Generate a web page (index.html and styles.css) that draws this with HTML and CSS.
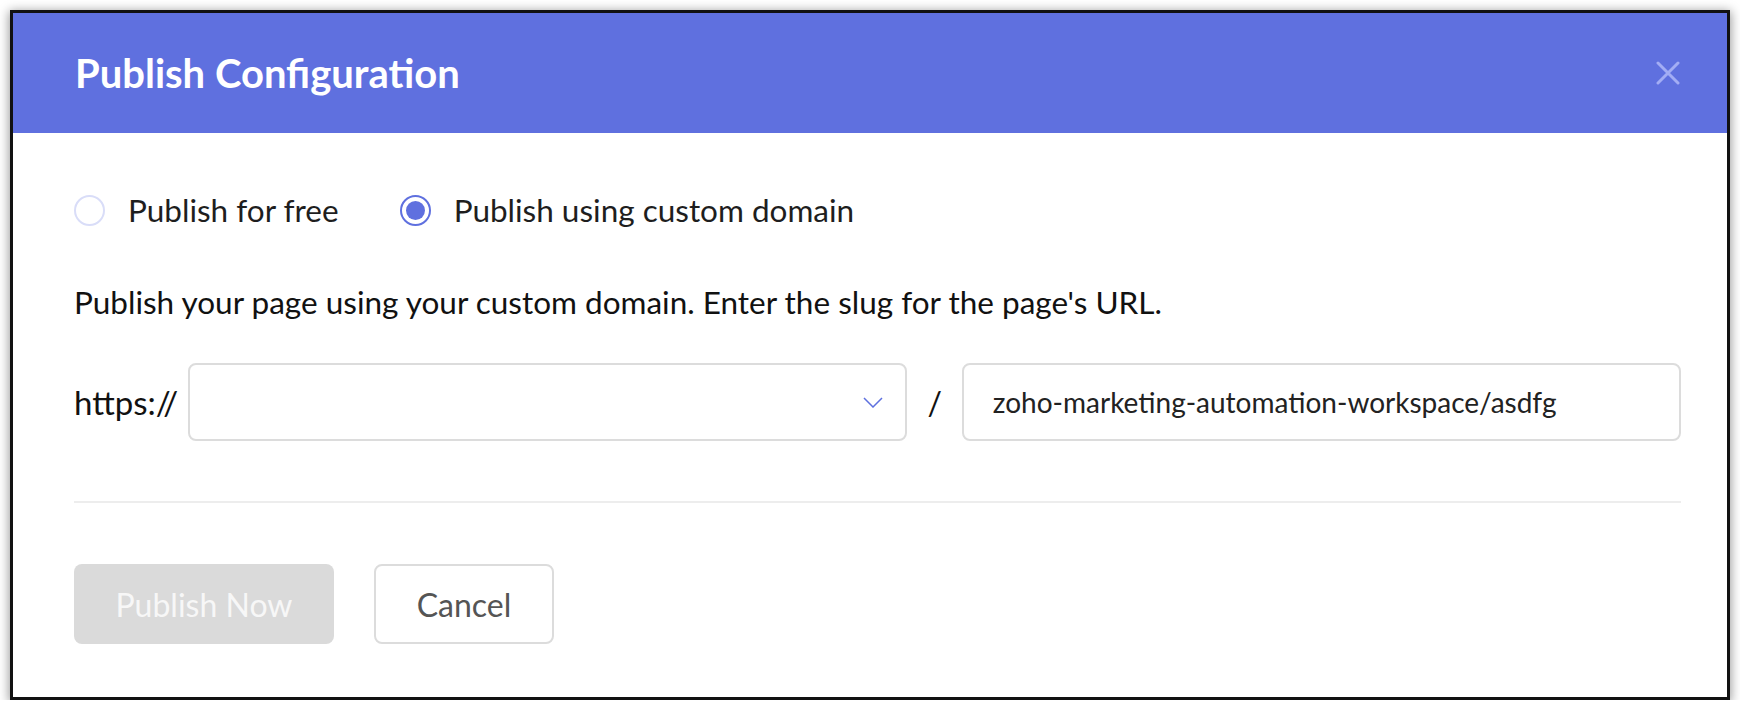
FILE: index.html
```html
<!DOCTYPE html>
<html lang="en">
<head>
<meta charset="utf-8">
<title>Publish Configuration</title>
<link rel="stylesheet" href="styles.css">
</head>
<body>
<div class="modal">
  <div class="modal-header">
    <h1 class="modal-title">Publish Configuration</h1>
    <button class="close-btn" aria-label="Close">
      <svg width="24" height="24" viewBox="0 0 24 24"><path d="M2 2 L22 22 M22 2 L2 22" stroke="#a3adf4" stroke-width="3" stroke-linecap="round"/></svg>
    </button>
  </div>
  <div class="modal-body">
    <div class="radio-row">
      <label class="radio-option">
        <span class="radio"></span>
        <span class="radio-label">Publish for free</span>
      </label>
      <label class="radio-option">
        <span class="radio checked"><span class="radio-dot"></span></span>
        <span class="radio-label">Publish using custom domain</span>
      </label>
    </div>
    <p class="description">Publish your page using your custom domain. Enter the slug for the page's URL.</p>
    <div class="url-row">
      <span class="protocol">https://</span>
      <div class="field select-field">
        <span class="field-value"></span>
        <svg class="chevron" width="20" height="11" viewBox="0 0 20 11"><polyline points="1,1 10,10 19,1" fill="none" stroke="#5e70df" stroke-width="1.5"/></svg>
      </div>
      <span class="slash">/</span>
      <div class="field slug-field">
        <span class="field-value">zoho-marketing-automation-workspace/asdfg</span>
      </div>
    </div>
    <div class="divider"></div>
    <div class="actions">
      <button class="btn btn-primary" disabled>Publish Now</button>
      <button class="btn btn-secondary">Cancel</button>
    </div>
  </div>
</div>
</body>
</html>
```
FILE: styles.css
```css
* { box-sizing: border-box; }
html, body { margin: 0; padding: 0; background: #ffffff; }
body {
  font-family: Lato, "Open Sans", sans-serif;
  padding: 10px 0 0 10px;
}
.modal {
  width: 1720px;
  height: 690px;
  border: 3px solid #111;
  background: #fff;
  box-shadow: 0 2px 10px 1px rgba(0,0,0,0.4);
  display: flex;
  flex-direction: column;
}
.modal-header {
  height: 120px;
  background: #5f70df;
  display: flex;
  align-items: center;
  justify-content: space-between;
  padding: 0 47px 0 62px;
}
.modal-title {
  margin: 0;
  color: #fff;
  font-size: 40px;
  font-weight: 700;
  line-height: 46px;
}
.close-btn {
  background: none;
  border: 0;
  padding: 0;
  width: 24px;
  height: 24px;
  display: flex;
  cursor: pointer;
}
.modal-body {
  padding: 57px 46px 0 61px;
  display: flex;
  flex-direction: column;
}
.radio-row {
  display: flex;
  align-items: center;
  height: 40px;
  gap: 61px;
}
.radio-option {
  display: flex;
  align-items: center;
  gap: 23px;
}
.radio {
  width: 31px;
  height: 31px;
  border-radius: 50%;
  border: 2px solid #d9ddf8;
  display: flex;
  align-items: center;
  justify-content: center;
}
.radio.checked { border-color: #5f70df; }
.radio-dot {
  width: 19px;
  height: 19px;
  border-radius: 50%;
  background: #5f70df;
}
.radio-label {
  font-size: 31.5px;
  color: #1e1e1e;
  line-height: 40px;
}
.description {
  margin: 52px 0 0;
  font-size: 31.5px;
  line-height: 40px;
  color: #111;
}
.url-row {
  margin-top: 41px;
  display: flex;
  align-items: center;
}
.protocol {
  font-size: 33px;
  color: #111;
  margin-right: 10px;
}
.field {
  flex: 1;
  height: 78px;
  border: 2px solid #dcdcdc;
  border-radius: 8px;
  display: flex;
  align-items: center;
  padding: 0 22px 0 29px;
}
.field-value {
  flex: 1;
  font-size: 28px;
  color: #222;
}
.chevron { display: block; }
.slash {
  font-size: 32px;
  color: #111;
  margin: 0 20px;
}
.divider {
  margin-top: 60px;
  height: 2px;
  background: #ededed;
}
.actions {
  margin-top: 61px;
  display: flex;
  gap: 40px;
}
.btn {
  height: 80px;
  border-radius: 8px;
  font-family: Lato, "Open Sans", sans-serif;
  font-size: 32px;
  padding: 0;
}
.btn-primary {
  width: 260px;
  background: #dadada;
  color: #f7f7f7;
  border: 0;
}
.btn-secondary {
  width: 180px;
  background: #fff;
  color: #555;
  border: 2px solid #dcdcdc;
}
```
